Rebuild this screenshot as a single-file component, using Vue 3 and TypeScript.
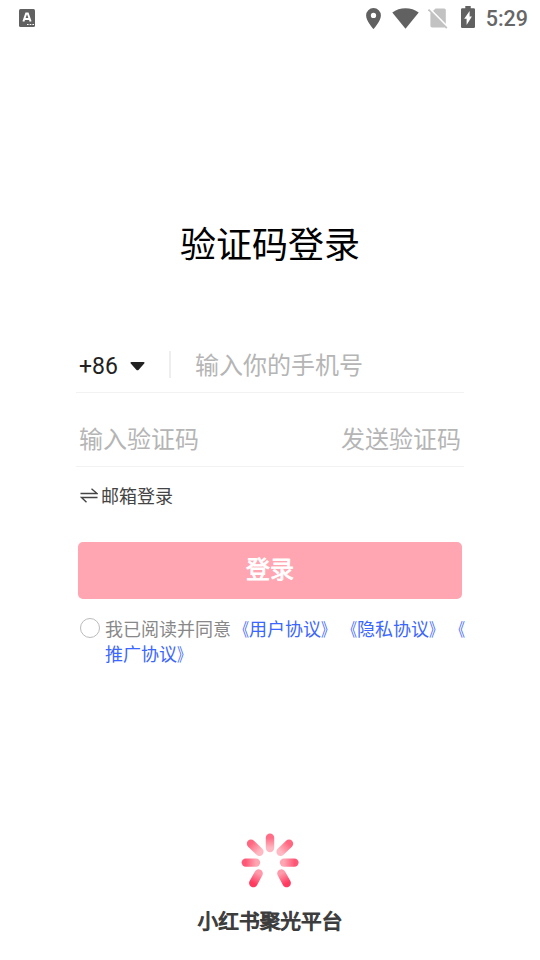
<script setup lang="ts">
import { ref } from 'vue'

interface Petal {
  x1: number
  y1: number
  x2: number
  y2: number
  from: string
  to: string
}

const phone = ref('')
const code = ref('')
const agreed = ref(false)

// Each petal runs from its outer end to its inner end.
const petals: Petal[] = [
  { x1: 29, y1: 4.8, x2: 29, y2: 15, from: '#ff6d86', to: '#ffb9c3' },
  { x1: 10, y1: 10.7, x2: 18.4, y2: 18.8, from: '#ff667f', to: '#ffb9c3' },
  { x1: 48, y1: 10.7, x2: 39.6, y2: 18.8, from: '#ff667f', to: '#ffb9c3' },
  { x1: 4.8, y1: 29.6, x2: 15, y2: 29.6, from: '#ff5876', to: '#ffa6b3' },
  { x1: 53.4, y1: 29.6, x2: 43, y2: 29.6, from: '#ff5876', to: '#ffa6b3' },
  { x1: 12.3, y1: 50.1, x2: 17.6, y2: 40.5, from: '#ff3b60', to: '#ff9aaa' },
  { x1: 45.7, y1: 50.1, x2: 40.4, y2: 40.5, from: '#ff3b60', to: '#ff9aaa' },
]
</script>

<template>
  <div class="screen">
    <header class="status">
      <svg class="ime" width="16" height="18" viewBox="0 0 16 18">
        <rect width="16" height="18" rx="1.5" fill="#616161" />
        <path d="M4.4 12.500 7.200 4.500h1.600l2.800 8M5.600 10.100h4.800" fill="none" stroke="#fff" stroke-width="2" />
        <path d="M8 15.500h1.600M10.700 15.500h1.600M13.400 15.500H15" stroke="#fff" stroke-width="1" />
      </svg>
      <div class="system">
        <svg class="pin" width="15" height="21" viewBox="0 0 15 21">
          <path fill-rule="evenodd" d="M7.5 0A7.4 7.4 0 0 0 .1 7.4C.1 12.8 7.5 21 7.5 21s7.4-8.200 7.400-13.600A7.400 7.400 0 0 0 7.500 0Zm0 4.800a2.650 2.650 0 1 1 0 5.300 2.650 2.650 0 0 1 0-5.300Z" fill="#616161" />
        </svg>
        <svg class="wifi" width="27" height="21" viewBox="0 0 27 21">
          <path d="M.3 4.500C7.500-1.200 19.500-1.200 26.700 4.500L13.500 20.700Z" fill="#616161" />
        </svg>
        <svg class="sim" width="20" height="21" viewBox="0 0 20 21">
          <path d="M7.500.5h8.700q1.600 0 1.600 1.600v15.700q0 1.600-1.600 1.600H4q-1.600 0-1.600-1.600V5.600Z" fill="#c2c2c2" />
          <path d="M1.500.5 19.500 18.900" stroke="#fff" stroke-width="1.800" />
          <path d="M.5 1.500 18.800 20.200" stroke="#c2c2c2" stroke-width="1.700" />
        </svg>
        <svg class="battery" width="14" height="22" viewBox="0 0 14 22">
          <path d="M4.300 0h5.400v2.200h3q1.300 0 1.300 1.300v17.200q0 1.300-1.300 1.300H1.300Q0 22 0 20.700V3.500q0-1.300 1.300-1.300h3Z" fill="#616161" />
          <path d="M8.600 5v5.400h2.300L5.600 19v-6.200H3.200Z" fill="#fff" />
        </svg>
        <span class="clock">5:29</span>
      </div>
    </header>

    <main class="form">
      <h1>验证码登录</h1>
      <div class="field phone">
        <button class="country" type="button">
          <span>+86</span>
          <svg width="15" height="9" viewBox="0 0 15 9">
            <path d="M1.500 0h12q1.800.300.500 1.700L8.700 7.700q-1.200 1.200-2.400 0L1 1.700Q-.3.300 1.500 0Z" fill="#222" />
          </svg>
        </button>
        <i class="divider"></i>
        <input v-model="phone" type="tel" placeholder="输入你的手机号" />
      </div>
      <div class="field code">
        <input v-model="code" type="text" placeholder="输入验证码" />
        <button class="send" type="button">发送验证码</button>
      </div>
      <button class="switch" type="button">
        <svg width="18" height="15" viewBox="0 0 18 15">
          <path d="M.5 5.500H17L11.500.8M17.500 9.500H1.500L6.500 14.200" fill="none" stroke="#444" stroke-width="1.400" />
        </svg>
        <span>邮箱登录</span>
      </button>
      <button class="login" type="button">登录</button>
      <div class="agreement">
        <button class="radio" type="button" role="checkbox" :aria-checked="agreed" @click="agreed = !agreed"></button>
        <p>我已阅读并同意<a><b class="open">《</b>用户协议<b class="close">》</b></a><a><b class="open">《</b>隐私协议<b class="close">》</b></a><a><b class="open">《</b><br />推广协议<b class="close">》</b></a></p>
      </div>
    </main>

    <footer class="brand">
      <svg width="58" height="58" viewBox="0 0 58 58">
        <defs>
          <linearGradient
            v-for="(p, i) in petals"
            :id="`petal-${i}`"
            :key="i"
            gradientUnits="userSpaceOnUse"
            :x1="p.x1"
            :y1="p.y1"
            :x2="p.x2"
            :y2="p.y2"
          >
            <stop offset="0" :stop-color="p.from" />
            <stop offset="1" :stop-color="p.to" />
          </linearGradient>
        </defs>
        <line
          v-for="(p, i) in petals"
          :key="i"
          :x1="p.x1"
          :y1="p.y1"
          :x2="p.x2"
          :y2="p.y2"
          :stroke="`url(#petal-${i})`"
          stroke-width="8.4"
          stroke-linecap="round"
        />
      </svg>
      <div class="name">小红书聚光平台</div>
    </footer>
  </div>
</template>

<style>
body {
  background: #fff;
}
</style>

<style scoped>
.screen {
  display: flex;
  flex-direction: column;
  box-sizing: border-box;
  width: 540px;
  height: 960px;
  background: #fff;
  font-family: Roboto, 'Noto Sans CJK SC', sans-serif;
  text-spacing-trim: space-all;
  overflow: hidden;
}
button,
input {
  padding: 0;
  border: 0;
  background: none;
  font-family: inherit;
  outline: 0;
}
svg {
  display: block;
  flex: none;
}
.status {
  display: flex;
  justify-content: space-between;
  align-items: center;
  height: 36px;
  padding: 0 12px 0 19px;
}
.system {
  display: flex;
  align-items: center;
}
.wifi {
  margin-left: 11px;
}
.sim {
  margin-left: 9px;
}
.battery {
  margin-left: 13px;
  margin-bottom: 2px;
}
.clock {
  margin-left: 11px;
  font-size: 21.5px;
  font-weight: 500;
  line-height: 36px;
  color: #666;
  padding-top: 2px;
}
.form {
  padding: 0 76px;
}
h1 {
  margin: 183px 0 0;
  font-size: 36px;
  font-weight: 400;
  line-height: 54px;
  text-align: center;
  color: #000;
}
.field {
  display: flex;
  align-items: center;
  box-sizing: border-box;
  border-bottom: 1px solid #f2f2f2;
  padding: 0 3px;
}
.phone {
  height: 55px;
  margin-top: 65px;
}
.code {
  height: 74px;
  padding-top: 20px;
}
.country {
  display: flex;
  align-items: center;
  gap: 12px;
  width: 90px;
  padding-top: 2px;
  font-size: 23px;
  color: #222;
}
.divider {
  width: 2px;
  height: 27px;
  margin-bottom: 1px;
  background: #eee;
}
input {
  flex: 1;
  min-width: 0;
  height: 36px;
  font-size: 24px;
}
.phone input {
  padding: 2px 0 0 24px;
}
input::placeholder {
  color: #b5b5b5;
  opacity: 1;
}
.send {
  font-size: 24px;
  line-height: 36px;
  color: #b5b5b5;
}
.switch {
  display: flex;
  align-items: center;
  gap: 3px;
  height: 28px;
  margin: 14px 0 0 4px;
  font-size: 18px;
  color: #444;
}
.login {
  display: block;
  width: 384px;
  height: 57px;
  margin: 33px 0 0 2px;
  padding-bottom: 7px;
  border-radius: 5px;
  background: #ffa6b2;
  color: #fff;
  font-size: 24px;
  -webkit-text-stroke: 0.8px #fff;
}
.agreement {
  display: flex;
  gap: 5px;
  margin: 18px -12px 0 4px;
}
.radio {
  flex: none;
  box-sizing: border-box;
  width: 20px;
  height: 20px;
  margin-top: 1px;
  border: 1px solid #bbb;
  border-radius: 50%;
}
p {
  margin: 0;
  font-size: 18px;
  line-height: 25px;
  color: #888;
  white-space: nowrap;
}
a {
  color: #3b66ff;
}
b {
  display: inline-block;
  font-weight: 400;
}
.open {
  transform: scaleX(0.75);
  transform-origin: right;
}
.close {
  transform: scaleX(0.75);
  transform-origin: left;
}
.brand {
  display: flex;
  flex-direction: column;
  align-items: center;
  margin-top: auto;
  padding-bottom: 22px;
}
.name {
  margin-top: 15px;
  font-size: 20.7px;
  line-height: 32px;
  color: #3c3c3c;
  -webkit-text-stroke: 1.1px #3c3c3c;
}
</style>
